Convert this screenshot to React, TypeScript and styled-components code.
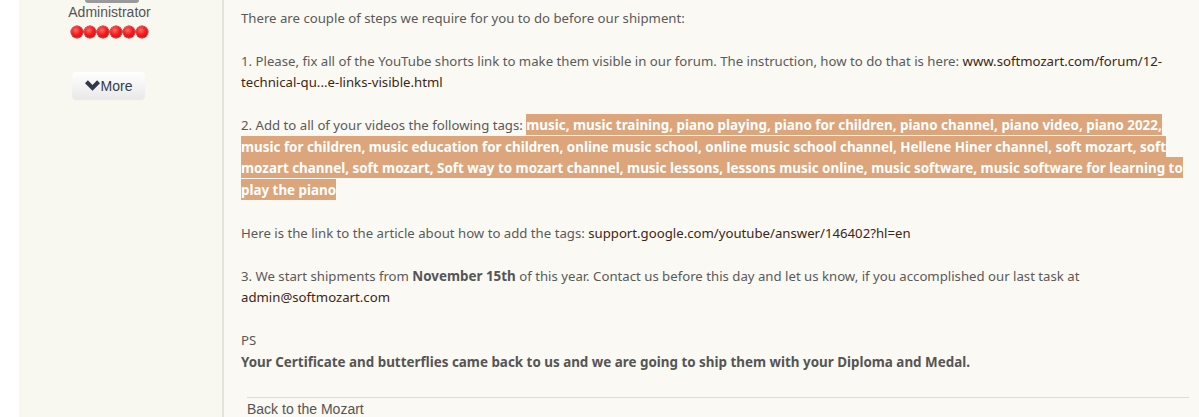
import React from "react";
import styled, { createGlobalStyle } from "styled-components";

const Global = createGlobalStyle`
  html, body { margin: 0; padding: 0; background: #ffffff; overflow: hidden; }
  body { width: 1199px; height: 417px; }
`;

const Page = styled.div`
  display: flex;
  height: 417px;
  padding-left: 19px;
  background: #ffffff;
`;

const Profile = styled.aside`
  flex: none;
  width: 205px;
  box-sizing: border-box;
  background: #f8f7f0;
  border-right: 2px solid #e4e2db;
  display: flex;
  flex-direction: column;
  align-items: center;
  padding-right: 22px;
  font-family: "Liberation Sans", Arial, sans-serif;
`;

const TitleBadge = styled.div`
  width: 54px;
  height: 3px;
  background: #9a9a9a;
  border-radius: 0 0 4px 4px;
  margin-left: 4px;
`;

const Role = styled.div`
  margin-top: 1px;
  font-size: 14px;
  line-height: 16px;
  color: #555555;
`;

const Dots = styled.div`
  display: flex;
  gap: 1px;
  margin-top: 6px;
`;

const Dot = styled.span`
  width: 12px;
  height: 12px;
  border-radius: 50%;
  background: radial-gradient(circle at 40% 35%, #ff6a6a 0%, #f01c1c 45%, #c80d0d 100%);
  box-shadow: 0 0 0 0.5px #b30000;
`;

const MoreButton = styled.button`
  margin-top: 34px;
  margin-left: -3px;
  width: 73px;
  height: 27px;
  display: flex;
  align-items: center;
  justify-content: center;
  gap: 1px;
  padding: 0 0 0 1px;
  border: none;
  border-radius: 4px;
  background: linear-gradient(#ffffff, #e9e9e9);
  box-shadow: 0 1px 1px rgba(0, 0, 0, 0.06);
  font-family: "Liberation Sans", Arial, sans-serif;
  font-size: 14px;
  color: #333b4a;
`;

const Post = styled.main`
  flex: 1;
  min-width: 0;
  background: #faf9f3;
  padding: 7.5px 0 0 17px;
  display: flex;
  flex-direction: column;
`;

const Body = styled.div`
  font-family: "Noto Sans", "Open Sans", sans-serif;
  font-size: 13.2px;
  line-height: 21.5px;
  color: #5a5a5a;
  white-space: nowrap;
`;

const Para = styled.p`
  margin: 0 0 21.5px 0;
  &:last-child {
    margin-bottom: 0;
  }
`;

const Link = styled.a`
  color: #3e2616;
  text-decoration: none;
`;

const Strong = styled.strong`
  font-weight: 700;
  font-size: 13.4px;
  line-height: 1;
  color: #555555;
`;

const Tags = styled.span`
  font-weight: 700;
  font-size: 13.4px;
  line-height: 1;
  color: #ffffff;
  background: #dca57b;
  padding: 2px 0 1px;
`;

const Footer = styled.div`
  margin: 23.5px 10px 0 6px;
  border-top: 1px solid #dedcd6;
  padding-top: 3px;
  font-family: "Liberation Sans", Arial, sans-serif;
  font-size: 14px;
  line-height: 16px;
  color: #555555;
`;

function Chevron() {
  return (
    <svg width="15" height="11" viewBox="0 0 15 11" aria-hidden="true">
      <path d="M0 3.2 L2.9 0.3 L7.5 4.9 L12.1 0.3 L15 3.2 L7.5 10.7 Z" fill="#333a47" />
    </svg>
  );
}

export default function App() {
  return (
    <>
      <Global />
      <Page>
        <Profile>
          <TitleBadge />
          <Role>Administrator</Role>
          <Dots>
            {Array.from({ length: 6 }).map((_, i) => (
              <Dot key={i} />
            ))}
          </Dots>
          <MoreButton>
            <Chevron />
            More
          </MoreButton>
        </Profile>
        <Post>
          <Body>
            <Para>There are couple of steps we require for you to do before our shipment:</Para>
            <Para>
              1. Please, fix all of the YouTube shorts link to make them visible in our forum. The instruction, how to do that is here:{" "}
              <Link href="#">
                www.softmozart.com/forum/12-
                <br />
                technical-qu...e-links-visible.html
              </Link>
            </Para>
            <Para>
              2. Add to all of your videos the following tags:{" "}
              <Tags>
                music, music training, piano playing, piano for children, piano channel, piano video, piano 2022,
                <br />
                music for children, music education for children, online music school, online music school channel, Hellene Hiner channel, soft mozart, soft
                <br />
                mozart channel, soft mozart, Soft way to mozart channel, music lessons, lessons music online, music software, music software for learning to
                <br />
                play the piano
              </Tags>
            </Para>
            <Para>
              Here is the link to the article about how to add the tags:{" "}
              <Link href="#">support.google.com/youtube/answer/146402?hl=en</Link>
            </Para>
            <Para>
              3. We start shipments from <Strong>November 15th</Strong> of this year. Contact us before this day and let us know, if you accomplished our last task at
              <br />
              <Link href="#">admin@softmozart.com</Link>
            </Para>
            <Para>
              PS
              <br />
              <Strong>Your Certificate and butterflies came back to us and we are going to ship them with your Diploma and Medal.</Strong>
            </Para>
          </Body>
          <Footer>Back to the Mozart</Footer>
        </Post>
      </Page>
    </>
  );
}
